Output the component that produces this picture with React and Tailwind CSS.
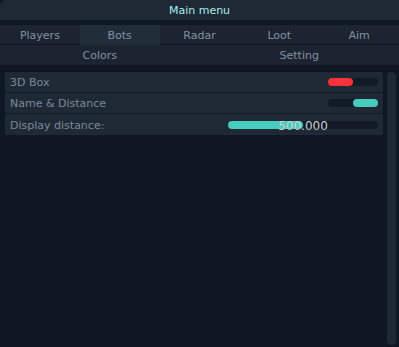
import React from 'react';

const tabs = ['Players', 'Bots', 'Radar', 'Loot', 'Aim'];

function Toggle({ on }) {
    return (
        <div className="w-[50px] h-[8px] rounded-full bg-[#111a25] flex">
            <div className={`w-[25px] h-full rounded-full ${on ? 'ml-auto bg-[#48cbbd]' : 'bg-[#f5333a]'}`} />
        </div>
    );
}

function Row({ label, children, last }) {
    return (
        <div className={`h-[21px] flex items-center justify-between pl-[5px] pr-[5px] bg-[#1f2936] ${last ? '' : 'border-b border-[#121a25]'}`}>
            <span className="pt-[3px] text-[#7c8898]">{label}</span>
            {children}
        </div>
    );
}

export default function App() {
    const value = 500;
    return (
        <div className="w-[399px] h-[347px] bg-[#101724] flex flex-col text-[11px] overflow-hidden" style={{ fontFamily: '"DejaVu Sans", sans-serif' }}>
            <div className="h-[20px] shrink-0 pt-[3px] bg-[#1f2936] rounded-tl-[6px] flex items-center justify-center text-[#a6eeec]">
                Main menu
            </div>
            <div className="h-[5px] shrink-0" />
            <div className="h-[20px] shrink-0 grid grid-cols-5 bg-[#1b2430] border-b border-[#111924] text-[#8391a2]">
                {tabs.map(t => (
                    <div key={t} className={`pt-[3px] flex items-center justify-center ${t === 'Bots' ? 'bg-[#222d3a]' : ''}`}>{t}</div>
                ))}
            </div>
            <div className="h-[20px] shrink-0 grid grid-cols-2 bg-[#1b2430] text-[#8391a2]">
                <div className="pt-[3px] flex items-center justify-center">Colors</div>
                <div className="pt-[3px] flex items-center justify-center">Setting</div>
            </div>
            <div className="flex-1 flex gap-[4px] pl-[5px] pr-[3px] pt-[7px] pb-[2px] min-h-0">
                <div className="flex-1 self-start flex flex-col">
                    <Row label="3D Box"><Toggle on={false} /></Row>
                    <Row label="Name & Distance"><Toggle on /></Row>
                    <Row label="Display distance:" last>
                        <div className="relative w-[150px] h-[8px] rounded-full bg-[#111a25]">
                            <div className="h-full rounded-full bg-[#48cbbd]" style={{ width: `${value / 1000 * 100}%` }} />
                            <span className="absolute inset-0 pt-[2px] flex items-center justify-center text-[12px] text-[#c9ced4]">500.000</span>
                        </div>
                    </Row>
                </div>
                <div className="w-[9px] rounded-full bg-[#1f2936]" />
            </div>
        </div>
    );
}
